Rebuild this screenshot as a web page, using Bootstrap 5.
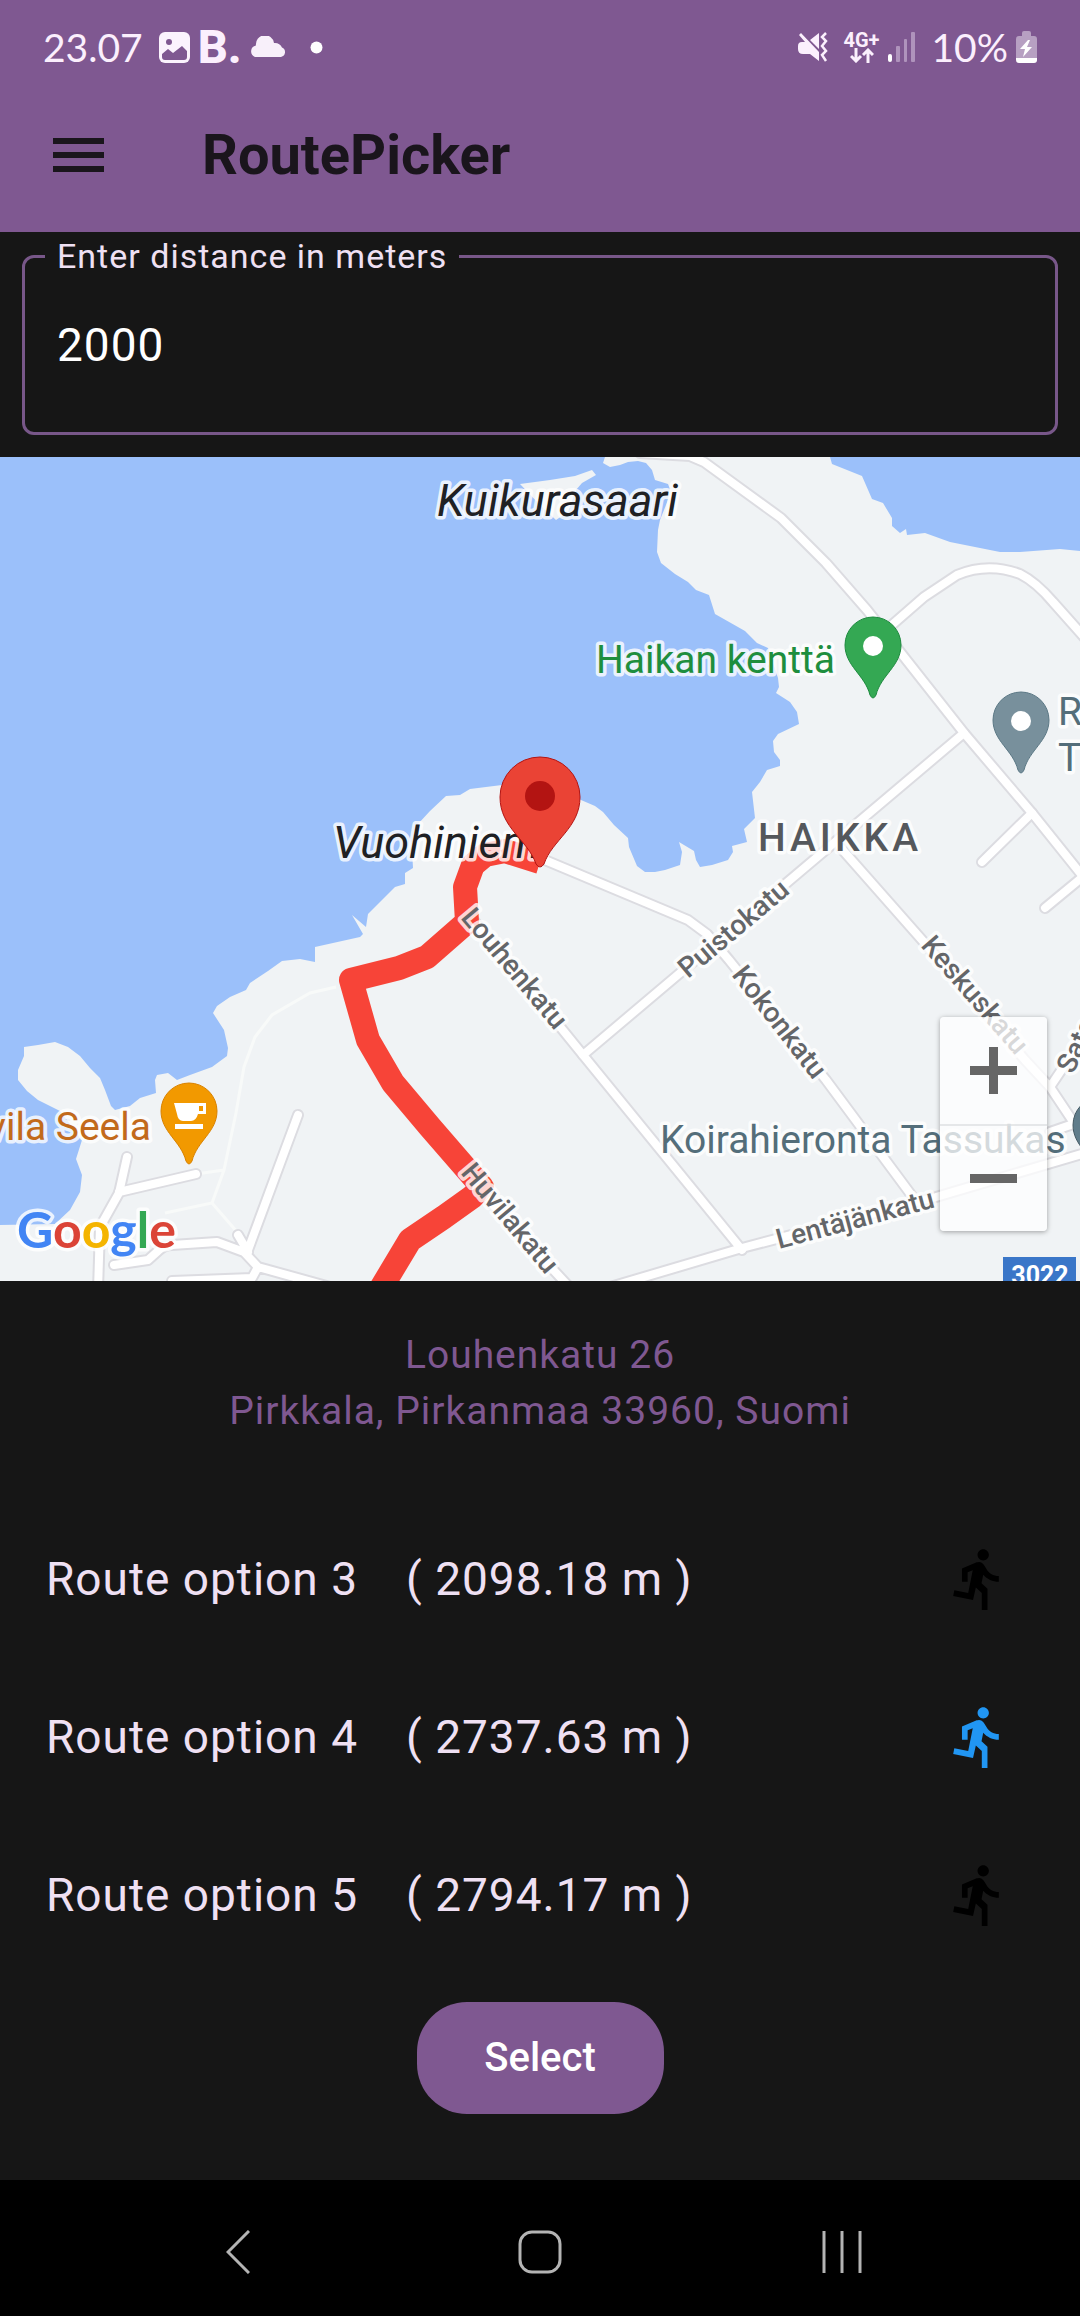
<!DOCTYPE html>
<html lang="en">
<head>
<meta charset="utf-8">
<meta name="viewport" content="width=device-width, initial-scale=1">
<title>RoutePicker</title>
<link href="https://cdn.jsdelivr.net/npm/bootstrap@5.3.0/dist/css/bootstrap.min.css" rel="stylesheet">
<style>
  :root { --plum: #7f5891; --ink: #161616; --lilac: #efe0f3; }
  body { background: var(--ink); color: var(--lilac); font-family: Roboto, "Noto Sans", sans-serif; }
  svg { display: block; flex: none; }
  .app-head { background: var(--plum); }
  .status-bar { height: 76px; padding: 18px 43px 0 43px; color: #fbeffd; font: 39px/58px Lato, Roboto, sans-serif; }
  .brand-b { width: 40px; font: 800 47px/58px Roboto, sans-serif; }
  .net { width: 36px; font: 700 20px/16px Roboto, sans-serif; }
  .title-bar { height: 156px; padding: 2px 53px 0; gap: 98px; }
  .title-bar h1 { color: #1a151c; font-size: 56px; line-height: 64px; font-weight: 700; }
  .menu-btn { color: #1a151c; }
  .field-wrap { padding: 8px 22px 22px; }
  .outlined { border: 3px solid #785789; border-radius: 12px; height: 195px; padding: 0 32px; }
  .outlined legend { font-size: 34px; line-height: 32px; padding: 0 12px; margin-left: -12px; letter-spacing: 1px; }
  .outlined input { color: #fff; font-size: 46px; line-height: 60px; letter-spacing: 1px; margin-top: 43px; }
  .outlined input:focus { color: #fff; box-shadow: none; }
  .map { height: 824px; background: #f0f3f5; }
  .map > svg { width: 100%; height: 100%; }
  .halo { paint-order: stroke; stroke: #fff; stroke-opacity: .8; stroke-width: 7px; stroke-linejoin: round; }
  .natural { font-size: 45px; font-style: italic; fill: #202124; }
  .poi { font-size: 39px; }
  .street { font-size: 28px; font-weight: 500; fill: #646669; }
  .zoomer { right: 33px; bottom: 50px; width: 107px; background: rgba(255,255,255,.75); box-shadow: 0 1px 5px rgba(0,0,0,.35); border-radius: 4px; }
  .zoomer button { height: 107px; color: #666; }
  .zoomer button + button { border-top: 2px solid rgba(220,222,224,.7) !important; }
  .address { color: var(--plum); font-size: 39px; line-height: 56px; letter-spacing: 1px; padding-top: 46px; margin-bottom: 61px; }
  .route-row { height: 158px; padding: 0 67px 0 46px; background: transparent; color: var(--lilac); font-size: 46px; letter-spacing: 1px; gap: 48px; }
  .route-row svg { fill: #000; }
  .route-row[aria-pressed="true"] svg { fill: #2196f3; }
  .select-btn { width: 247px; height: 112px; margin-top: 28px; border-radius: 50px; background: var(--plum); color: #fff; font-size: 40px; font-weight: 500; }
  .sys-nav { height: 136px; padding: 8px 87px 0; background: #000; color: #b4b4b4; }
</style>
</head>
<body class="d-flex flex-column min-vh-100">

<header class="app-head">
  <div class="status-bar d-flex align-items-center">
    <span>23.07</span>
    <svg class="ms-3" width="31" height="31" viewBox="0 0 31 31" aria-hidden="true"><rect width="31" height="31" rx="6" fill="#fbf3fd"/><circle cx="10" cy="10" r="3" fill="#7f5891"/><path d="M3 22l6-5 5 4 9-7 5 5v6q0 3-3 3H6q-3 0-3-3z" fill="#7f5891"/></svg>
    <span class="brand-b ms-2 me-1">B.</span>
    <svg class="ms-2" width="36" height="22" viewBox="0 0 36 22" aria-hidden="true"><path d="M5 21h26a5 5 0 0 0 1-9.500A8 8 0 0 0 24 7 9 9 0 0 0 6 9.500 6 6 0 0 0 5 21z" fill="#f8f0fa"/></svg>
    <svg class="ms-4" width="13" height="13" viewBox="0 0 13 13" aria-hidden="true"><circle cx="6.500" cy="6.500" r="6" fill="#fff"/></svg>
    <div class="ms-auto d-flex align-items-center">
      <svg width="30" height="31" viewBox="0 0 30 31" fill="#fbf0fd" aria-hidden="true"><path d="M0 14q0-4 4-4h3L1 3l2-2 18 19v9l-9-7H5q-5 0-5-5zM12 8l9-7v16z"/><path d="M28 1l-4 4 4 4-4 5 4 5-4 4 4 6" fill="none" stroke="#fbf0fd" stroke-width="2.500"/></svg>
      <div class="net text-center ms-3">4G+
        <svg class="mx-auto" width="24" height="15" viewBox="0 0 24 15" fill="none" stroke="#fbf0fd" stroke-width="3" aria-hidden="true"><path d="M6 0v13M1 8l5 5 5-5M18 15V2M13 7l5-5 5 5"/></svg>
      </div>
      <svg class="ms-2 me-3" width="28" height="30" viewBox="0 0 28 30" aria-hidden="true"><g fill="#af93bc"><rect x="8" y="14" width="4" height="16" rx="1"/><rect x="16" y="7" width="3" height="23" rx="1"/><rect x="23" y="0" width="4" height="30" rx="1"/></g><rect y="22" width="4" height="8" rx="2" fill="#fff"/></svg>
      <span>10%</span>
      <svg class="ms-2" width="21" height="32" viewBox="0 0 21 32" aria-hidden="true"><path d="M3 5h3V2q0-2 2-2h5q2 0 2 2v3h3q3 0 3 3v20H0V8q0-3 3-3z" fill="#b7a0c2"/><path d="M0 27h21v2q0 3-3 3H3q-3 0-3-3z" fill="#fff"/><path d="M12 9L4 18h5l-2 8 9-10h-5l3-7z" fill="#fff"/></svg>
    </div>
  </div>
  <div class="title-bar d-flex align-items-center">
    <button class="menu-btn btn p-0 border-0" aria-label="Open menu"><svg width="51" height="34" viewBox="0 0 51 34" fill="currentColor"><path d="M0 0h51v6H0zM0 14h51v6H0zM0 28h51v6H0z"/></svg></button>
    <h1 class="m-0">RoutePicker</h1>
  </div>
</header>

<main class="flex-grow-1">
  <form class="field-wrap">
    <fieldset class="outlined">
      <legend class="float-none w-auto mb-0"><label for="distance">Enter distance in meters</label></legend>
      <input id="distance" class="form-control bg-transparent border-0 p-0" type="text" inputmode="numeric" value="2000">
    </fieldset>
  </form>

  <section class="map position-relative overflow-hidden" aria-label="Map">
    <svg viewBox="0 457 1080 824" preserveAspectRatio="xMidYMid slice" font-family="Roboto, 'Noto Sans', sans-serif">
      <!-- water -->
      <g fill="#9bc0fa">
        <path d="M0 457H605L603 463 610 467 620 465 628 462 638 461 646 463 652 470 655 480 668 484 671 492 664 510 660 520 658 530 657 552 661 563 675 574 688 582 696 590 709 595 715 614 745 631 757 643 768 648 778 678 779 687 776 693 790 702 797 712 799 724 778 734 773 741 774 752 780 760 780 766 767 770 760 782 752 792 755 818 744 829 747 842 732 846 733 852 728 860 712 865 700 867 696 860 694 851 679 842 682 852 680 865 665 870 655 872 645 872 637 866 629 847 628 838 614 825 603 812 595 806 581 800 560 790 502 785 470 789 460 795 446 796 430 811 418 824 412 850 413 868 405 873 405 884 395 887 368 914 366 927 352 915 363 934 360 937 315 947 315 962 300 959 282 961 268 971 250 983 246 990 230 997 217 1006 213 1013 224 1030 228 1048 227 1056 212 1067 190 1075 177 1080 168 1073 157 1075 155 1080 156 1093 140 1098 130 1106 115 1110 111 1106 105 1090 100 1078 90 1068 80 1056 68 1047 55 1042 38 1045 24 1047 24 1056 18 1070 18 1080 27 1091 38 1100 60 1111 82 1140 76 1159 82 1175 80 1192 70 1210 55 1224 0 1225Z"/>
        <path d="M830 457L832 464 862 476 872 499 883 503 892 518 892 526 900 533 906 529 907 535 925 533 950 542 980 548 1000 552 1020 552 1060 549 1080 551V457Z"/>
      </g>
      <path d="M520 484L550 480 575 476 592 470 596 475 582 483 576 490 568 512 556 520 540 505Z" fill="#f0f3f5"/>
      <!-- footpaths -->
      <path d="M336 987L310 993 272 1015 255 1037 244 1067 236 1113 224 1170 212 1203 165 1213M212 1203L238 1233M196 1174L224 1170" fill="none" stroke="#f8faf9" stroke-width="3"/>
      <!-- streets: casing below, white surface above -->
      <defs>
        <g id="streets" fill="none" stroke-linecap="round" stroke-linejoin="round">
          <path d="M640 453L690 456 704 462 781 518 826 563 867 610 964 733 1032 813 1085 879"/>
          <path d="M893 624L924 597 957 575Q988 562 1020 574 1036 582 1053 602L1085 638"/>
          <path d="M964 733L583 1055M1032 813L982 862M1085 875L1045 908"/>
          <path d="M840 847L922 940 1025 1060 1050 1087 1076 1126M1050 1087L1085 1035M1050 1132L1085 1120"/>
          <path d="M540 858L688 920 707 934 729 960 826 1080 915 1200"/>
          <path d="M467 912L583 1055 742 1250M600 1290L742 1248 936 1197 1085 1153"/>
          <path d="M470 1180L572 1290"/>
          <path d="M127 1157L119 1193 100 1227 98 1290M196 1174L119 1192M298 1115L248 1250M114 1265L148 1260 158 1251Q164 1245 172 1245L217 1242 244 1252 258 1267 330 1287M258 1267L252 1278 172 1281M238 1235L248 1252"/>
        </g>
      </defs>
      <use href="#streets" stroke="#dcdce1" stroke-width="12"/>
      <use href="#streets" stroke="#fff" stroke-width="8"/>
      <!-- chosen route -->
      <path d="M540 862L505 851 485 855 473 865 465 887 467 922 427 957 399 968 351 980 368 1040 393 1083 430 1127 482 1187 472 1197 444 1217 410 1240 374 1300" fill="none" stroke="#f74438" stroke-width="24" stroke-linejoin="round"/>
      <!-- labels -->
      <g class="halo">
        <text class="natural" x="437" y="516">Kuikurasaari</text>
        <text class="natural" x="333" y="858">Vuohiniemi</text>
        <text class="poi" x="596" y="673" fill="#1e8e3e">Haikan kenttä</text>
        <text class="poi" x="1058" y="725" fill="#546e7a">R</text>
        <text class="poi" x="1058" y="771" fill="#546e7a">T</text>
        <text class="poi" x="660" y="1153" fill="#546e7a">Koirahieronta Tassukas</text>
        <text class="poi" x="151" y="1140" text-anchor="end" fill="#c26a1b">Huvila Seela</text>
        <text x="758" y="851" font-size="39" font-weight="500" fill="#55585c" letter-spacing="4">HAIKKA</text>
        <g class="street">
          <text transform="translate(460 918) rotate(50)">Louhenkatu</text>
          <text transform="translate(460 1173) rotate(50)">Huvilakatu</text>
          <text transform="translate(688 979) rotate(-40)">Puistokatu</text>
          <text transform="translate(731 975) rotate(52)">Kokonkatu</text>
          <text transform="translate(920 946) rotate(49)">Keskuskatu</text>
          <text transform="translate(779 1249) rotate(-15)">Lentäjänkatu</text>
          <text transform="translate(1073 1075) rotate(-65)">Satamakatu</text>
        </g>
      </g>
      <rect x="1003" y="1257" width="73" height="34" fill="#3a76c8"/>
      <text x="1040" y="1284" text-anchor="middle" font-size="25" font-weight="700" fill="#fff">3022</text>
      <!-- pins -->
      <defs><path id="pin" d="M0 -81A28 28 0 0 1 28 -53C28 -32 8 -23 3 -3Q0 3 -3 -3C-8 -23 -28 -32 -28 -53A28 28 0 0 1 0 -81Z"/></defs>
      <use href="#pin" x="873" y="698" fill="#34a853" stroke="#1e8a3f" stroke-width="1"/><circle cx="873" cy="646" r="10" fill="#fff"/>
      <use href="#pin" x="1021" y="773" fill="#78909c" stroke="#5b7885" stroke-width="1"/><circle cx="1021" cy="721" r="10" fill="#fff"/>
      <use href="#pin" x="1101" y="1178" fill="#607d8b" stroke="#455a64" stroke-width="1"/>
      <use href="#pin" x="189" y="1164" fill="#f29900" stroke="#d98200" stroke-width="1"/>
      <path d="M174 1103h32v11h-8q-2 7-7 7h-8q-5 0-6-7zM175 1124h28v5h-28z" fill="#fff"/><path d="M199 1106h4v5h-4z" fill="#f29900"/>
      <path d="M540 757A40 40 0 0 1 580 797C580 828 552 840 544 864Q540 870 536 864C528 840 500 828 500 797A40 40 0 0 1 540 757Z" fill="#ea4335" stroke="#b31412" stroke-width="1"/><circle cx="540" cy="796" r="15" fill="#b31412"/>
      <!-- provider logo -->
      <text class="halo" x="17" y="1248" font-family="Lato, Roboto, sans-serif" font-size="50" font-weight="700"><tspan fill="#4285f4">G</tspan><tspan fill="#db4437">o</tspan><tspan fill="#f4b400">o</tspan><tspan fill="#4285f4">g</tspan><tspan fill="#34a853">l</tspan><tspan fill="#db4437">e</tspan></text>
    </svg>
    <div class="zoomer position-absolute d-flex flex-column">
      <button class="btn border-0 rounded-0 p-0 d-flex align-items-center justify-content-center" aria-label="Zoom in"><svg width="47" height="47" viewBox="0 0 47 47" fill="currentColor"><path d="M19 0h9v19h19v9H28v19h-9V28H0v-9h19z"/></svg></button>
      <button class="btn border-0 rounded-0 p-0 d-flex align-items-center justify-content-center" aria-label="Zoom out"><svg width="47" height="9" viewBox="0 0 47 9" fill="currentColor"><path d="M0 0h47v9H0z"/></svg></button>
    </div>
  </section>

  <address class="address text-center">Louhenkatu 26<br>Pirkkala, Pirkanmaa 33960, Suomi</address>

  <svg class="d-none"><symbol id="run" viewBox="0 0 24 24"><path d="M13.490 5.480c1.100 0 2-.9 2-2s-.9-2-2-2-2 .9-2 2 .9 2 2 2zm-3.600 13.900l1-4.400 2.100 2v6h2v-7.500l-2.100-2 .6-3c1.300 1.500 3.300 2.500 5.500 2.500v-2c-1.900 0-3.500-1-4.300-2.400l-1-1.600c-.4-.6-1-1-1.700-1-.3 0-.5.1-.8.1l-5.200 2.200v4.700h2v-3.400l1.800-.7-1.600 8.100-4.900-1-.4 2 7 1.400z"/></symbol></svg>
  <div class="d-flex flex-column">
    <button class="route-row btn border-0 rounded-0 d-flex align-items-center" aria-pressed="false"><span>Route option 3</span><span>( 2098.18 m )</span><svg class="ms-auto" width="68" height="68"><use href="#run"/></svg></button>
    <button class="route-row btn border-0 rounded-0 d-flex align-items-center" aria-pressed="true"><span>Route option 4</span><span>( 2737.63 m )</span><svg class="ms-auto" width="68" height="68"><use href="#run"/></svg></button>
    <button class="route-row btn border-0 rounded-0 d-flex align-items-center" aria-pressed="false"><span>Route option 5</span><span>( 2794.17 m )</span><svg class="ms-auto" width="68" height="68"><use href="#run"/></svg></button>
  </div>
  <button class="select-btn btn border-0 d-block mx-auto">Select</button>
</main>

<nav class="sys-nav d-flex align-items-center" aria-label="System">
  <button class="btn border-0 p-0 flex-fill w-100 text-reset" aria-label="Back"><svg class="mx-auto" width="24" height="44" viewBox="0 0 24 44" fill="none" stroke="currentColor" stroke-width="3"><path d="M23 1L2 22l21 21"/></svg></button>
  <button class="btn border-0 p-0 flex-fill w-100 text-reset" aria-label="Home"><svg class="mx-auto" width="44" height="44" viewBox="0 0 44 44" fill="none" stroke="currentColor" stroke-width="3"><rect x="2" y="2" width="40" height="40" rx="12"/></svg></button>
  <button class="btn border-0 p-0 flex-fill w-100 text-reset" aria-label="Recent apps"><svg class="mx-auto" width="40" height="42" viewBox="0 0 40 42" fill="none" stroke="currentColor" stroke-width="3"><path d="M2 0v42M20 0v42M38 0v42"/></svg></button>
</nav>

<script src="https://cdn.jsdelivr.net/npm/bootstrap@5.3.0/dist/js/bootstrap.bundle.min.js"></script>
</body>
</html>
